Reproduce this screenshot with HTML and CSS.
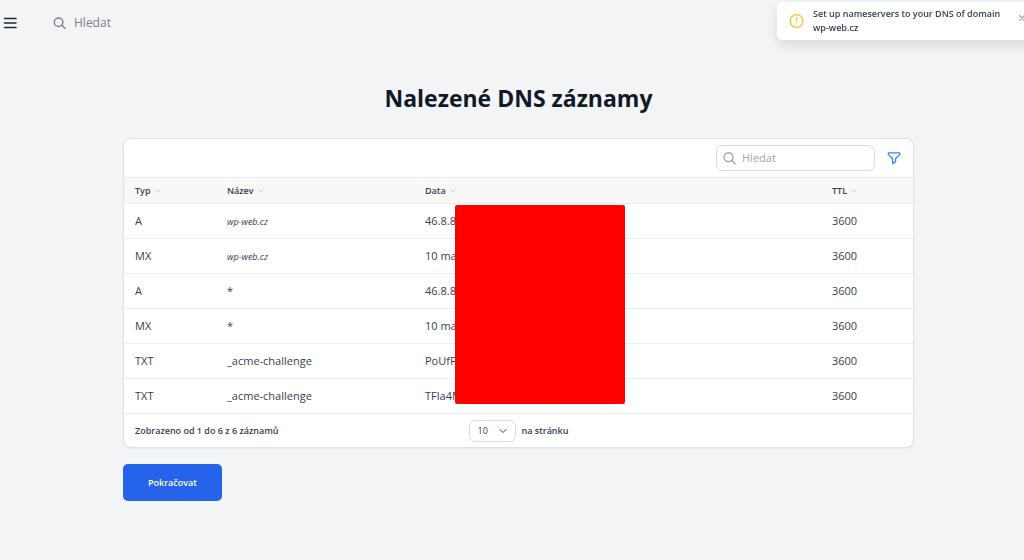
FILE: index.html
```html
<!DOCTYPE html>
<html lang="cs">
<head>
    <meta charset="UTF-8">
    <meta name="viewport" content="width=device-width, initial-scale=1.0">
    <title>Nalezené DNS záznamy</title>
    <link rel="stylesheet" href="styles.css">
</head>
<body>
    <header class="topbar">
        <button type="button" class="menu-button" aria-label="Menu">
            <svg width="14" height="12" viewBox="0 0 14 12" fill="none" stroke="currentColor" stroke-width="1.5" stroke-linecap="round"><path d="M1.5 1.5h11.5M1.5 6h11.5M1.5 10.5h11.5"/></svg>
        </button>
        <label class="top-search">
            <svg class="search-icon" viewBox="0 0 14 14" fill="none" stroke="currentColor" stroke-width="1.5" stroke-linecap="round"><circle cx="6" cy="5.6" r="4.6"/><path d="M9.5 9L13 12.4"/></svg>
            <input type="search" placeholder="Hledat" aria-label="Hledat">
        </label>
    </header>

    <div class="toast" role="status">
        <svg class="toast-icon" viewBox="0 0 16 16" fill="none" stroke="currentColor" stroke-width="1.3" stroke-linecap="round"><circle cx="7.6" cy="8" r="6.4"/><path d="M7.6 4.8v3.8M7.6 11v.1"/></svg>
        <p>Set up nameservers to your DNS of domain wp-web.cz</p>
        <button type="button" class="toast-close" aria-label="Zavřít">
            <svg width="8" height="8" viewBox="0 0 8 8" fill="none" stroke="currentColor" stroke-width="1.1" stroke-linecap="round"><path d="M1.5 1.5l5 5M6.5 1.5l-5 5"/></svg>
        </button>
    </div>

    <main class="content">
        <h1>Nalezené DNS záznamy</h1>

        <section class="card">
            <div class="toolbar">
                <label class="table-search">
                    <svg class="search-icon" viewBox="0 0 14 14" fill="none" stroke="currentColor" stroke-width="1.5" stroke-linecap="round"><circle cx="6" cy="5.6" r="4.8"/><path d="M9.6 9.2L13 12.6"/></svg>
                    <input type="search" placeholder="Hledat" aria-label="Hledat v záznamech">
                </label>
                <button type="button" class="filter-button" aria-label="Filtr">
                    <svg width="14" height="14" viewBox="0 0 14 14" fill="none" stroke="currentColor" stroke-width="1.3" stroke-linejoin="round"><path d="M1.6 1.8h10.8q.5 0 .4.6v1L8.6 7.8v2.8L5.6 12.6V7.8L1.3 3.4v-1q-.1-.6.3-.6z"/></svg>
                </button>
            </div>

            <div class="table-wrap">
                <table>
                    <colgroup>
                        <col class="col-type">
                        <col class="col-name">
                        <col class="col-data">
                        <col class="col-ttl">
                    </colgroup>
                    <thead>
                        <tr>
                            <th scope="col">Typ <svg class="sort" viewBox="0 0 6 4"><path d="M1 1l2 2 2-2"/></svg></th>
                            <th scope="col">Název <svg class="sort" viewBox="0 0 6 4"><path d="M1 1l2 2 2-2"/></svg></th>
                            <th scope="col">Data <svg class="sort" viewBox="0 0 6 4"><path d="M1 1l2 2 2-2"/></svg></th>
                            <th scope="col">TTL <svg class="sort" viewBox="0 0 6 4"><path d="M1 1l2 2 2-2"/></svg></th>
                        </tr>
                    </thead>
                    <tbody>
                        <tr><td>A</td><td><em>wp-web.cz</em></td><td>46.8.8</td><td>3600</td></tr>
                        <tr><td>MX</td><td><em>wp-web.cz</em></td><td>10 ma</td><td>3600</td></tr>
                        <tr><td>A</td><td>*</td><td>46.8.8</td><td>3600</td></tr>
                        <tr><td>MX</td><td>*</td><td>10 ma</td><td>3600</td></tr>
                        <tr><td>TXT</td><td>_acme-challenge</td><td>PoUfF</td><td>3600</td></tr>
                        <tr><td>TXT</td><td>_acme-challenge</td><td>TFla4M</td><td>3600</td></tr>
                    </tbody>
                </table>
                <div class="redacted"></div>
            </div>

            <div class="card-footer">
                <span>Zobrazeno od 1 do 6 z 6 záznamů</span>
                <div class="per-page">
                    <span class="select-wrap">
                        <select id="per-page">
                            <option>10</option>
                            <option>25</option>
                            <option>50</option>
                        </select>
                        <svg class="chevron" viewBox="0 0 8 6" fill="none" stroke="currentColor" stroke-width="1" stroke-linecap="round" stroke-linejoin="round"><path d="M1 1.5l3 3 3-3"/></svg>
                    </span>
                    <label for="per-page">na stránku</label>
                </div>
                <span></span>
            </div>
        </section>

        <button type="button" class="primary-button">Pokračovat</button>
    </main>
</body>
</html>
```
FILE: styles.css
```css
* {
    margin: 0;
    padding: 0;
    box-sizing: border-box;
}

body {
    background: #f3f4f6;
    color: #374151;
    font-family: "Segoe UI", "Open Sans", "Noto Sans", sans-serif;
    font-size: 11px;
    line-height: 16px;
}

button, input, select {
    font: inherit;
    color: inherit;
    border: none;
    background: none;
}

button {
    cursor: pointer;
}

svg {
    display: block;
}

input {
    width: 100%;
    outline: none;
    appearance: none;
}

input::placeholder {
    color: #9ca3af;
    opacity: 1;
}

.search-icon {
    width: 13px;
    height: 13px;
    flex: none;
}

/* Top bar */
.topbar {
    display: flex;
    align-items: center;
    gap: 36px;
    height: 46px;
    padding: 0 3px;
}

.menu-button {
    color: #1f2937;
}

.top-search {
    display: flex;
    align-items: center;
    gap: 8px;
    color: #7b818c;
    font-size: 12px;
}

.top-search input::placeholder {
    color: #7b818c;
}

/* Notification, runs off the right edge */
.toast {
    position: fixed;
    top: 2px;
    right: -10px;
    display: flex;
    align-items: center;
    gap: 8px;
    width: 257px;
    height: 38px;
    padding: 0 8px 0 12px;
    border-radius: 6px;
    background: #fff;
    color: #374151;
    font-size: 9px;
    font-weight: 600;
    line-height: 14px;
    box-shadow: 0 6px 12px rgba(0, 0, 0, 0.1);
}

.toast p {
    flex: 1;
}

.toast-icon {
    width: 16px;
    height: 16px;
    flex: none;
    color: #fbc02d;
}

.toast-close {
    align-self: flex-start;
    padding-top: 12px;
    color: #9ca3af;
}

/* Page */
.content {
    padding: 32px 110px 32px 123px;
}

h1 {
    margin-bottom: 20px;
    color: #111827;
    font-size: 23px;
    font-weight: 700;
    line-height: 40px;
    text-align: center;
}

.card {
    border: 1px solid #dfe2e6;
    border-radius: 8px;
    background: #fff;
    box-shadow: 0 1px 2px rgba(0, 0, 0, 0.06);
}

.toolbar {
    display: flex;
    align-items: center;
    justify-content: flex-end;
    gap: 12px;
    height: 38px;
    padding: 0 12px;
}

.table-search {
    display: flex;
    align-items: center;
    gap: 6px;
    width: 159px;
    height: 26px;
    padding: 0 6px;
    border: 1px solid #d9dce1;
    border-radius: 6px;
    color: #9ca3af;
}

.filter-button {
    color: #3b82f6;
}

.table-wrap {
    position: relative;
}

table {
    width: 100%;
    table-layout: fixed;
    border-collapse: separate;
    border-spacing: 0;
}

.col-type { width: 92px; }
.col-name { width: 198px; }
.col-ttl { width: 92px; }

th, td {
    padding-left: 11px;
    text-align: left;
    border-bottom: 1px solid #eceef0;
}

th {
    height: 27px;
    border-top: 1px solid #eceef0;
    background: #f8f8f9;
    font-size: 9px;
    font-weight: 600;
}

td {
    height: 35px;
}

td em {
    font-size: 9px;
}

.sort {
    display: inline-block;
    width: 6px;
    height: 4px;
    margin-left: 2px;
    vertical-align: middle;
    fill: none;
    stroke: #c9cdd3;
}

/* Hides the record values */
.redacted {
    position: absolute;
    top: 28px;
    bottom: 10px;
    left: 331px;
    width: 170px;
    border-radius: 2px;
    background: #f00;
}

.card-footer {
    display: grid;
    grid-template-columns: 1fr auto 1fr;
    align-items: center;
    height: 33px;
    padding: 0 11px;
    font-size: 9px;
    font-weight: 600;
}

.per-page {
    display: flex;
    align-items: center;
    gap: 6px;
}

.select-wrap {
    position: relative;
}

.select-wrap select {
    display: block;
    width: 47px;
    height: 22px;
    padding-left: 8px;
    border: 1px solid #d9dce1;
    border-radius: 6px;
    appearance: none;
    font-weight: 400;
}

.chevron {
    position: absolute;
    top: 8px;
    right: 9px;
    width: 8px;
    height: 6px;
    pointer-events: none;
}

.primary-button {
    height: 37px;
    margin-top: 16px;
    padding: 0 25px;
    border-radius: 5px;
    background: #2563eb;
    color: #fff;
    font-size: 9px;
    font-weight: 600;
}
```
